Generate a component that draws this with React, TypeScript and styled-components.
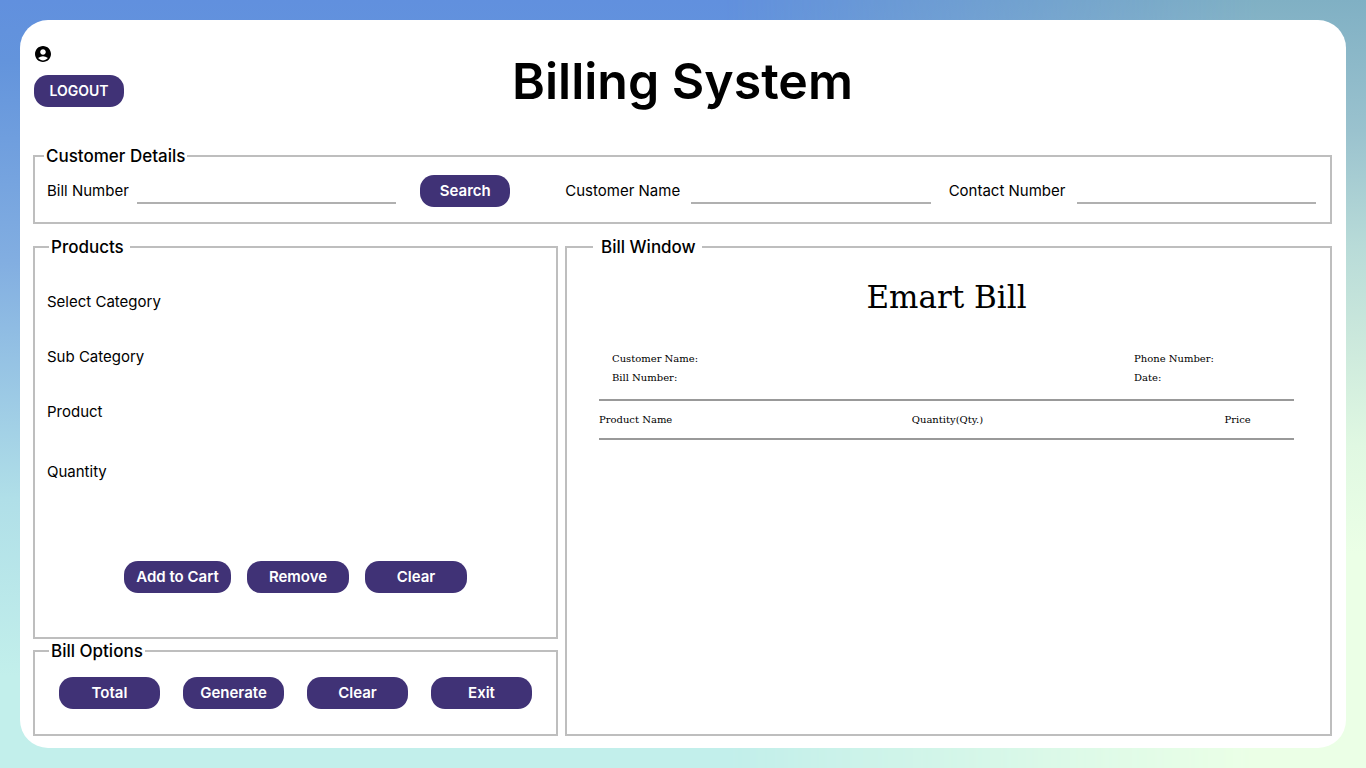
import React from "react";
import styled, { createGlobalStyle } from "styled-components";
import { MdAccountCircle } from "react-icons/md";

const GlobalStyle = createGlobalStyle`
  * { box-sizing: border-box; }
  body {
    margin: 0;
    color: #000;
    font: 400 15px/24px Inter, "Open Sans", sans-serif;
  }
`;

const Page = styled.div`
  position: relative;
  isolation: isolate;
  display: flex;
  min-height: 100vh;
  padding: 20px;
  background: linear-gradient(to bottom, #6190de 0%, #6394dc 8%, #82aee1 34%, #b0dfe8 65%, #c2efeb 88%);

  &::before {
    content: "";
    position: absolute;
    inset: 0;
    z-index: -1;
    background: linear-gradient(to bottom, #80b0c4 0%, #9ac2ce 17%, #b8dbd8 32%, #cbe8dc 44%, #e0f8e2 58%, #ebffe6 72%);
    mask-image: linear-gradient(to right, transparent 53%, #000 92%);
  }
`;

const Panel = styled.main`
  flex: 1;
  display: flex;
  flex-direction: column;
  padding: 0 14px 12px 13px;
  border-radius: 28px;
  background: #fff;
`;

const Header = styled.header`
  display: grid;
  grid-template-columns: 1fr auto 1fr;
  padding: 26px 1px 33px;
`;

const Account = styled.div`
  display: flex;
  flex-direction: column;
  align-items: flex-start;
  gap: 13px;

  svg { margin-left: 1px; }
`;

const Title = styled.h1`
  margin: 5px 0 0;
  font-size: 50px;
  line-height: 60px;
  font-weight: 600;
`;

const Button = styled.button<{ $width: number; $caps?: boolean }>`
  width: ${(p) => p.$width}px;
  height: 32px;
  padding: 0;
  border: 0;
  border-radius: 14px;
  background: #403276;
  color: #fff;
  font-family: Inter, "Open Sans", sans-serif;
  font-size: ${(p) => (p.$caps ? 14 : 15)}px;
  line-height: 24px;
  font-weight: 600;
  cursor: pointer;
`;

const Box = styled.fieldset`
  min-width: 0;
  margin: 0;
  padding: 0;
  border: 2px solid #bebebe;
`;

const Legend = styled.legend<{ $indent: number; $pad: string }>`
  margin-left: ${(p) => p.$indent}px;
  padding: ${(p) => p.$pad};
  font-size: 17px;
  line-height: 24px;
  font-weight: 500;
`;

const CustomerRow = styled.div`
  display: grid;
  grid-template-columns: 90px 26fr 114px 181px 24fr 146px 24fr;
  align-items: center;
  padding: 7px 14px 15px 12px;
`;

const Label = styled.label<{ $before?: number }>`
  padding-left: ${(p) => p.$before ?? 0}px;
  white-space: nowrap;
`;

const Input = styled.input`
  width: 100%;
  min-width: 0;
  height: 26px;
  padding: 0 4px;
  border: 0;
  border-bottom: 2px solid #b0b0b0;
  background: transparent;
  font: inherit;
  outline: none;
`;

const SearchCell = styled.div`
  display: flex;
  justify-content: flex-end;
`;

const Columns = styled.div`
  flex: 1;
  display: grid;
  grid-template-columns: 525fr 767fr;
  gap: 7px;
  margin-top: 11px;
`;

const LeftColumn = styled.div`
  display: flex;
  flex-direction: column;
`;

const Products = styled(Box)`
  flex: 1;
`;

const ProductFields = styled.div`
  display: flex;
  flex-direction: column;
  gap: 31px;
  padding: 31px 12px 0;
`;

const FieldName = styled.span`
  &:last-child { margin-top: 5px; }
`;

const ButtonRow = styled.div<{ $gap: number; $pad: string }>`
  display: flex;
  justify-content: center;
  gap: ${(p) => p.$gap}px;
  padding: ${(p) => p.$pad};
`;

const Bill = styled.div`
  padding: 14px 36px 0 32px;
  font-family: "DejaVu Serif", serif;
  font-size: 10px;
  line-height: 19px;
`;

const BillTitle = styled.h2`
  margin: 0 0 28px;
  text-align: center;
  font-size: 31px;
  line-height: 48px;
  font-weight: 400;
`;

const BillInfo = styled.div`
  display: grid;
  grid-template-columns: 522fr 160fr;
  padding: 0 0 12px 13px;
`;

const BillTable = styled.table`
  width: 100%;
  table-layout: fixed;
  border-spacing: 0;

  th {
    height: 41px;
    padding: 0;
    border: solid #999;
    border-width: 2px 0;
    text-align: left;
    font-weight: 400;
    white-space: nowrap;
  }
  th:not(:last-child) { width: 45%; }
`;

export default function App() {
  return (
    <>
      <GlobalStyle />
      <Page>
        <Panel>
          <Header>
            <Account>
              <MdAccountCircle size={16} viewBox="2 2 20 20" />
              <Button type="button" $width={90} $caps>LOGOUT</Button>
            </Account>
            <Title>Billing System</Title>
          </Header>

          <Box>
            <Legend $indent={9} $pad="0 2px">Customer Details</Legend>
            <CustomerRow>
              <Label htmlFor="bill-number">Bill Number</Label>
              <Input id="bill-number" />
              <SearchCell>
                <Button type="button" $width={90}>Search</Button>
              </SearchCell>
              <Label htmlFor="customer-name" $before={55}>Customer Name</Label>
              <Input id="customer-name" />
              <Label htmlFor="contact-number" $before={18}>Contact Number</Label>
              <Input id="contact-number" />
            </CustomerRow>
          </Box>

          <Columns>
            <LeftColumn>
              <Products>
                <Legend $indent={14} $pad="0 6px 0 2px">Products</Legend>
                <ProductFields>
                  <FieldName>Select Category</FieldName>
                  <FieldName>Sub Category</FieldName>
                  <FieldName>Product</FieldName>
                  <FieldName>Quantity</FieldName>
                </ProductFields>
                <ButtonRow $gap={16} $pad="77px 0 44px">
                  <Button type="button" $width={107}>Add to Cart</Button>
                  <Button type="button" $width={102}>Remove</Button>
                  <Button type="button" $width={102}>Clear</Button>
                </ButtonRow>
              </Products>
              <Box>
                <Legend $indent={14} $pad="0 2px">Bill Options</Legend>
                <ButtonRow $gap={23} $pad="14px 0 25px">
                  <Button type="button" $width={101}>Total</Button>
                  <Button type="button" $width={101}>Generate</Button>
                  <Button type="button" $width={101}>Clear</Button>
                  <Button type="button" $width={101}>Exit</Button>
                </ButtonRow>
              </Box>
            </LeftColumn>

            <Box>
              <Legend $indent={26} $pad="0 6px 0 8px">Bill Window</Legend>
              <Bill>
                <BillTitle>Emart Bill</BillTitle>
                <BillInfo>
                  <span>Customer Name:</span>
                  <span>Phone Number:</span>
                  <span>Bill Number:</span>
                  <span>Date:</span>
                </BillInfo>
                <BillTable>
                  <thead>
                    <tr>
                      <th scope="col">Product Name</th>
                      <th scope="col">Quantity(Qty.)</th>
                      <th scope="col">Price</th>
                    </tr>
                  </thead>
                </BillTable>
              </Bill>
            </Box>
          </Columns>
        </Panel>
      </Page>
    </>
  );
}
